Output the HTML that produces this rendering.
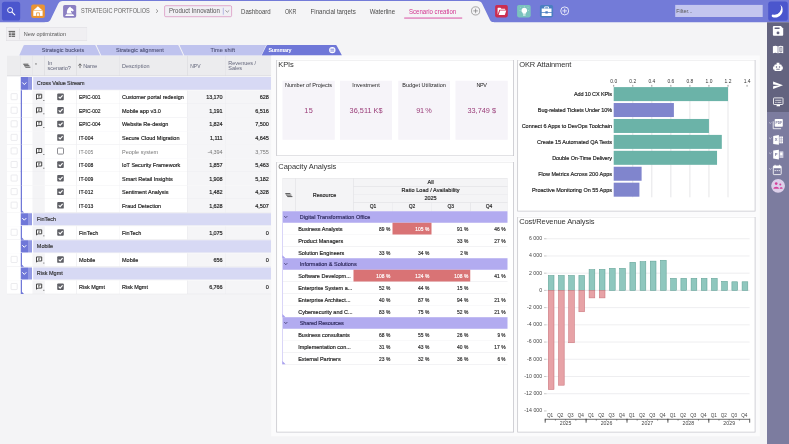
<!DOCTYPE html>
<html lang="en"><head><meta charset="utf-8"><title>Scenario creation</title>
<style>
html,body{margin:0;padding:0;background:#f4f4f6;overflow:hidden;}
body{width:789px;height:444px;position:relative;}
#stage{position:absolute;left:0;top:0;width:3156px;height:1776px;transform:scale(0.25);transform-origin:0 0;font-family:"Liberation Sans",sans-serif;overflow:hidden;}
#stage div,#stage span,#stage svg{position:absolute;}
#stage>div,#stage .t,#stage .t>div{left:0;top:0;width:0;height:0;}
#stage .t{transform:translateZ(0);}
#stage span{white-space:nowrap;}
#stage svg{overflow:visible;}
</style></head><body><div id="stage">
<div id="topbar">
<div style="left:0px;top:0px;width:3156px;height:89.2px;background:#737bd8;"></div>
<svg style="left:0px;top:0px;width:3156px;height:92px;" viewBox="0 0 789 23"><path d="M44.8,22.3 C49.3,22.3 49.8,21.1 51.1,18.6 L58.1,4.1 C59.2,1.9 60.3,1 62.8,1 L477,1 C480,1 481.2,1.8 482.3,4 L489.5,19 C490.6,21.3 491.3,22.3 494,22.3 L494,23 L44.8,23 Z" fill="#f4f4f6"/><rect x="1.9" y="1.8" width="18.3" height="18.8" rx="2.6" fill="#4b56cd"/><circle cx="10.1" cy="10.1" r="2.5" fill="none" stroke="#fff" stroke-width="0.9"/><path d="M12.1,12.2 L14.8,14.8" stroke="#fff" stroke-width="1.1" stroke-linecap="round"/><rect x="31.2" y="4.4" width="13.7" height="13.5" rx="2" fill="#ea9433"/><path d="M37.9,6.2 L42,9.9 L33.8,9.9 Z" fill="#fff"/><path d="M33.3,10.5 H42.6 V15.9 H33.3 Z" fill="#fff"/><path d="M36.6,15.9 V12.8 H39.4 V15.9" fill="none" stroke="#ea9433" stroke-width="0.8"/><rect x="63.1" y="4.9" width="13.1" height="12.8" rx="1.7" fill="#8b7fc2"/><path d="M66.9,13.4 C66.5,10.6 67.6,8.2 70.2,6.5 L70.9,7.7 C72.2,8.1 73.2,9.2 73.8,10.4 L72.9,11.4 L71,10.7 C70.7,11.6 71.6,12.4 72.1,13.4 Z M66.3,14.3 H73.1 L74.3,15.9 H65.1 Z" fill="#fff"/><rect x="164.6" y="5.7" width="67" height="11" rx="1.2" fill="#f1eff4" stroke="#d47bb4" stroke-width="0.6"/><path d="M223.3,7.8 V14.7" stroke="#7b82d4" stroke-width="0.5"/><path d="M225.4,10.4 L227.3,12.2 L229.2,10.4" fill="none" stroke="#555" stroke-width="0.55"/><path d="M156,9.3 L158,11.1 L156,12.9" fill="none" stroke="#666" stroke-width="0.6"/><rect x="404.2" y="17.6" width="58" height="0.9" fill="#d6409c"/><circle cx="475.6" cy="10.9" r="4.1" fill="none" stroke="#666" stroke-width="0.55"/><path d="M473.3,10.9 H477.9 M475.6,8.6 V13.2" stroke="#666" stroke-width="0.6"/><rect x="495.1" y="4.9" width="12.7" height="12.5" rx="1.8" fill="#cb2d4f"/><path d="M497.6,14.7 V8.1 Q497.6,7.7 498,7.7 H500.5 L501.4,8.7 H504.8 Q505.2,8.7 505.2,9.1 V9.7 H499.3 L497.6,14.7 Z M498.6,14.9 L500.1,10.4 H506.3 L504.8,14.9 Z" fill="#fff"/><rect x="517.1" y="4.9" width="13.6" height="12.5" rx="1.8" fill="#7bc2be"/><path d="M524.3,7.7 A2.8,2.8 0 0 1 525.8,12.9 V13.8 H522.8 V12.9 A2.8,2.8 0 0 1 524.3,7.7 Z M523,14.4 H525.6 V15.4 H523 Z" fill="#fff"/><path d="M524.3,5.9 V6.8 M520.4,7.3 L521,7.9 M528.2,7.3 L527.6,7.9 M519.6,10.5 H520.5 M528.1,10.5 H529" stroke="#d9f0ed" stroke-width="0.5"/><rect x="539.9" y="4.9" width="13.2" height="12.5" rx="1.8" fill="#4a7ec1"/><path d="M541.7,8.5 H551.5 V12 H547.8 V11.3 H545.4 V12 H541.7 Z M541.7,12.7 H545.4 V13.5 H547.8 V12.7 H551.5 V16 H541.7 Z" fill="#fff"/><path d="M544.7,8.5 V6.9 H548.5 V8.5" fill="none" stroke="#fff" stroke-width="0.9"/><circle cx="564.7" cy="10.9" r="4" fill="none" stroke="#fff" stroke-width="0.8"/><path d="M562.4,10.9 H567 M564.7,8.6 V13.2" stroke="#e4e5fa" stroke-width="0.95"/><rect x="675.2" y="4.9" width="87.5" height="12.1" fill="#c3c6ef"/><rect x="768.2" y="1.6" width="19.6" height="19.2" rx="2.6" fill="#4b56cd"/><path d="M780.2,4.6 A7.4,7.4 0 0 1 772.3,16.9 A1.3,1.3 0 0 1 772.8,14.5 A6.7,6.7 0 0 0 780.2,4.6 Z" fill="#fff"/></svg>
</div>
<div id="sidebar">
<div style="left:3068px;top:88.8px;width:88px;height:359.2px;background:#63637f;"></div>
<div style="left:3068px;top:448px;width:88px;height:1328px;background:#7c7c9f;"></div>
<svg style="left:3068px;top:88px;width:88px;height:712px;" viewBox="767 22 22 178"><path d="M772.9,27 Q772.9,26.1 773.8,26.1 H780.8 L783.2,28.5 V34.8 Q783.2,35.7 782.3,35.7 H773.8 Q772.9,35.7 772.9,34.8 Z" fill="#fff"/><rect x="774.6" y="27.4" width="5" height="1.7" rx="0.3" fill="#63637f"/><circle cx="778" cy="32.9" r="1.45" fill="#63637f"/><path d="M772.9,46.2 Q775.4,45.2 777.7,46.2 V53.2 Q775.4,52.4 772.9,53.2 Z" fill="#fff"/><path d="M778.3,46.2 Q780.8,45.2 783.2,46.2 V53.2 Q780.8,52.4 778.3,53.2 Z" fill="#fff"/><path d="M779.7,47.3 H782 V51.7 H779.7 Z M780.85,47.3 V51.7" fill="none" stroke="#63637f" stroke-width="0.55"/><path d="M776.6,62.7 H779.4 V64.4 H780.6 Q781.7,64.4 781.7,65.5 V66.5 H782.8 V69.5 H781.7 V70 Q781.7,71.1 780.6,71.1 H775.4 Q774.3,71.1 774.3,70 V69.5 H773.1 V66.5 H774.3 V65.5 Q774.3,64.4 775.4,64.4 H776.6 Z" fill="#fff"/><circle cx="776.5" cy="66.9" r="0.75" fill="#63637f"/><circle cx="779.5" cy="66.9" r="0.75" fill="#63637f"/><rect x="776.3" y="68.8" width="3.4" height="0.8" fill="#63637f"/><path d="M773.1,81.6 L783,85.35 L773.1,89.1 L773.1,86.3 L779.4,85.35 L773.1,84.4 Z" fill="#fff"/><rect x="773.5" y="97.9" width="9.5" height="6.6" rx="0.6" fill="none" stroke="#fff" stroke-width="0.85"/><path d="M776.6,105 H780 V106.3 H776.6 Z" fill="#fff"/><path d="M775.2,100.3 H781.4 M775.2,102.4 H776.6 M777.4,102.4 H781.4" stroke="#fff" stroke-width="0.7"/><rect x="774.7" y="119" width="8.1" height="7.7" rx="0.8" fill="#fff"/><path d="M773.2,121.3 V128.7 H781.1" fill="none" stroke="#fff" stroke-width="0.8"/><path d="M773.2,135.9 L778.9,135.1 V144.7 L773.2,143.9 Z" fill="#fff"/><rect x="779.4" y="136.5" width="3.6" height="6.8" fill="#fff"/><path d="M781.2,136.5 V143.3 M779.4,138.8 H783 M779.4,141 H783" stroke="#7c7c9f" stroke-width="0.45"/><path d="M773.2,150.6 L778.9,149.8 V159.4 L773.2,158.6 Z" fill="#fff"/><rect x="779.4" y="151.3" width="4" height="6.8" rx="0.5" fill="#c9c9dc"/><rect x="780.2" y="152.6" width="2.2" height="2.6" fill="#fff"/><rect x="773.3" y="166.1" width="7.9" height="8.5" rx="0.8" fill="none" stroke="#fff" stroke-width="0.85"/><path d="M773.3,165.8 H781.2 V168.2 H773.3 Z" fill="#fff"/><path d="M775.1,164.8 V166.4 M779.4,164.8 V166.4" stroke="#fff" stroke-width="0.9"/><path d="M774.7,170.6 H775.8 M776.7,170.6 H777.8 M778.7,170.6 H779.8" stroke="#fff" stroke-width="0.9"/><path d="M769,122.3 L770.3,123.5 L771.6,122.3" fill="none" stroke="#e6e6f2" stroke-width="0.55"/><path d="M769,137.6 L770.3,138.8 L771.6,137.6" fill="none" stroke="#e6e6f2" stroke-width="0.55"/><path d="M769,152.6 L770.3,153.8 L771.6,152.6" fill="none" stroke="#e6e6f2" stroke-width="0.55"/><path d="M769,168.3 L770.3,169.5 L771.6,168.3" fill="none" stroke="#e6e6f2" stroke-width="0.55"/><circle cx="778.1" cy="185.8" r="6.9" fill="#ddd0ea"/><circle cx="776.2" cy="183.6" r="1.35" fill="#d6409c"/><path d="M773.4,188.8 C773.4,186.1 779,186.1 779,188.8 Z" fill="#d6409c"/><circle cx="780.3" cy="184.5" r="1" fill="#d6409c"/><path d="M779.6,188.8 C779.4,187.2 782.6,186.5 782.6,188.8 Z" fill="#d6409c"/></svg>
</div>
<div id="toolbar">
<div style="left:24px;top:108px;width:324.8px;height:56px;background:#f0eff2;box-shadow:inset 0 0 0 1.6px #dcdce0;"></div>
<div style="left:77.2px;top:114.4px;width:1.6px;height:43.2px;background:#d2d2d8;"></div>
<svg style="left:28px;top:116px;width:40px;height:40px;" viewBox="7 29 10 10"><path d="M8.6,31.4 H15.1" stroke="#333" stroke-width="0.8"/><path d="M8.9,33.1 H10.9 M11.5,33.1 H15.1" stroke="#444" stroke-width="0.95"/><path d="M8.9,34.7 H10.9 M11.5,34.7 H15.1" stroke="#444" stroke-width="0.95"/><path d="M8.9,36.3 H10.9 M11.5,36.3 H15.1" stroke="#444" stroke-width="0.95"/></svg>
</div>
<div id="tabs">
<svg style="left:60px;top:176px;width:1340px;height:50px;" viewBox="15 44 335 12.5"><path d="M19.2,55.4 L23.6,45.6 Q23.9,45 24.6,45 L94.6,45 Q95.3,45 95.6,45.6 L100.3,55.4 Z" fill="#bfc3ee"/><path d="M101.3,55.4 L96.7,45.6 Q96.5,45 97.3,45 L177.6,45 Q178.3,45 178.6,45.6 L183.3,55.4 Z" fill="#bfc3ee"/><path d="M184.3,55.4 L179.7,45.6 Q179.5,45 180.3,45 L266.2,45 L261.2,55.4 Z" fill="#bfc3ee"/><path d="M261.6,55.4 L266.6,45.6 Q266.9,45 267.6,45 L335.6,45 Q336.3,45 336.6,45.6 L342,55.4 Z" fill="#6f77d8"/><circle cx="332.3" cy="50.1" r="3.2" fill="#fff"/><path d="M330.4,49.2 H334.2 M330.4,51 H334.2" stroke="#6f77d8" stroke-width="0.95"/></svg>
</div>
<div id="grid">
<div style="left:28px;top:223.2px;width:1056.4px;height:80px;background:#ececee;"></div>
<div style="left:79.6px;top:223.2px;width:1.6px;height:80px;background:#d6d6da;"></div>
<div style="left:128.8px;top:223.2px;width:1.6px;height:80px;background:#d6d6da;"></div>
<div style="left:178.4px;top:223.2px;width:1.6px;height:80px;background:#d6d6da;"></div>
<div style="left:305.2px;top:223.2px;width:1.6px;height:80px;background:#d6d6da;"></div>
<div style="left:477.6px;top:223.2px;width:1.6px;height:80px;background:#d6d6da;"></div>
<div style="left:748.4px;top:223.2px;width:1.6px;height:80px;background:#d6d6da;"></div>
<div style="left:901.6px;top:223.2px;width:1.6px;height:80px;background:#d6d6da;"></div>
<div style="left:28px;top:302.4px;width:1056.4px;height:1.8px;background:#d4d4d8;"></div>
<svg style="left:88px;top:240px;width:92px;height:48px;" viewBox="22 60 23 12"><path d="M23.6,64.2 H28.4 M24.6,65.7 H29.4 M25.6,67.2 H30.4" stroke="#444" stroke-width="0.9"/><path d="M23.4,63.8 L25.8,67.6" stroke="#444" stroke-width="0.5"/></svg>
<svg style="left:306px;top:240px;width:30px;height:48px;" viewBox="76.5 60 7.5 12"><path d="M80,68.1 V63.9 M78.4,65.6 L80,63.8 L81.6,65.6" fill="none" stroke="#555" stroke-width="0.8"/></svg>
<div style="left:28px;top:308px;width:104.8px;height:54.24px;background:#fff;"></div>
<div style="left:132.8px;top:308px;width:951.6px;height:50.8px;background:#d7d9f4;"></div>
<div style="left:82.8px;top:308px;width:29.6px;height:50.8px;background:#6f77d8;"></div>
<div style="left:112.4px;top:308px;width:16px;height:50.8px;background:#9399e3;"></div>
<div style="left:28px;top:362.24px;width:1056.4px;height:54.24px;background:#fff;"></div>
<div style="left:129.6px;top:362.24px;width:49.6px;height:54.24px;background:#f4f4f6;"></div>
<div style="left:749.2px;top:362.24px;width:335.2px;height:54.24px;background:#f5f5f7;"></div>
<div style="left:28px;top:415.48px;width:1056.4px;height:1.8px;background:#e6e6ea;"></div>
<div style="left:305.2px;top:362.24px;width:1.6px;height:54.24px;background:#e6e6ea;"></div>
<div style="left:477.6px;top:362.24px;width:1.6px;height:54.24px;background:#e6e6ea;"></div>
<div style="left:748.4px;top:362.24px;width:1.6px;height:54.24px;background:#e6e6ea;"></div>
<div style="left:901.6px;top:362.24px;width:1.6px;height:54.24px;background:#e6e6ea;"></div>
<div style="left:82.8px;top:361.04px;width:5.2px;height:55.44px;background:#7078d8;"></div>
<div style="left:28px;top:416.48px;width:1056.4px;height:54.24px;background:#fff;"></div>
<div style="left:129.6px;top:416.48px;width:49.6px;height:54.24px;background:#f4f4f6;"></div>
<div style="left:749.2px;top:416.48px;width:335.2px;height:54.24px;background:#f5f5f7;"></div>
<div style="left:28px;top:469.72px;width:1056.4px;height:1.8px;background:#e6e6ea;"></div>
<div style="left:305.2px;top:416.48px;width:1.6px;height:54.24px;background:#e6e6ea;"></div>
<div style="left:477.6px;top:416.48px;width:1.6px;height:54.24px;background:#e6e6ea;"></div>
<div style="left:748.4px;top:416.48px;width:1.6px;height:54.24px;background:#e6e6ea;"></div>
<div style="left:901.6px;top:416.48px;width:1.6px;height:54.24px;background:#e6e6ea;"></div>
<div style="left:82.8px;top:415.28px;width:5.2px;height:55.44px;background:#7078d8;"></div>
<div style="left:28px;top:470.72px;width:1056.4px;height:54.24px;background:#fff;"></div>
<div style="left:129.6px;top:470.72px;width:49.6px;height:54.24px;background:#f4f4f6;"></div>
<div style="left:749.2px;top:470.72px;width:335.2px;height:54.24px;background:#f5f5f7;"></div>
<div style="left:28px;top:523.96px;width:1056.4px;height:1.8px;background:#e6e6ea;"></div>
<div style="left:305.2px;top:470.72px;width:1.6px;height:54.24px;background:#e6e6ea;"></div>
<div style="left:477.6px;top:470.72px;width:1.6px;height:54.24px;background:#e6e6ea;"></div>
<div style="left:748.4px;top:470.72px;width:1.6px;height:54.24px;background:#e6e6ea;"></div>
<div style="left:901.6px;top:470.72px;width:1.6px;height:54.24px;background:#e6e6ea;"></div>
<div style="left:82.8px;top:469.52px;width:5.2px;height:55.44px;background:#7078d8;"></div>
<div style="left:28px;top:524.96px;width:1056.4px;height:54.24px;background:#fff;"></div>
<div style="left:129.6px;top:524.96px;width:49.6px;height:54.24px;background:#f4f4f6;"></div>
<div style="left:749.2px;top:524.96px;width:335.2px;height:54.24px;background:#f5f5f7;"></div>
<div style="left:28px;top:578.2px;width:1056.4px;height:1.8px;background:#e6e6ea;"></div>
<div style="left:305.2px;top:524.96px;width:1.6px;height:54.24px;background:#e6e6ea;"></div>
<div style="left:477.6px;top:524.96px;width:1.6px;height:54.24px;background:#e6e6ea;"></div>
<div style="left:748.4px;top:524.96px;width:1.6px;height:54.24px;background:#e6e6ea;"></div>
<div style="left:901.6px;top:524.96px;width:1.6px;height:54.24px;background:#e6e6ea;"></div>
<div style="left:82.8px;top:523.76px;width:5.2px;height:55.44px;background:#7078d8;"></div>
<div style="left:28px;top:579.2px;width:1056.4px;height:54.24px;background:#fff;"></div>
<div style="left:129.6px;top:579.2px;width:49.6px;height:54.24px;background:#f4f4f6;"></div>
<div style="left:749.2px;top:579.2px;width:335.2px;height:54.24px;background:#f5f5f7;"></div>
<div style="left:28px;top:632.44px;width:1056.4px;height:1.8px;background:#e6e6ea;"></div>
<div style="left:305.2px;top:579.2px;width:1.6px;height:54.24px;background:#e6e6ea;"></div>
<div style="left:477.6px;top:579.2px;width:1.6px;height:54.24px;background:#e6e6ea;"></div>
<div style="left:748.4px;top:579.2px;width:1.6px;height:54.24px;background:#e6e6ea;"></div>
<div style="left:901.6px;top:579.2px;width:1.6px;height:54.24px;background:#e6e6ea;"></div>
<div style="left:82.8px;top:578px;width:5.2px;height:55.44px;background:#7078d8;"></div>
<div style="left:28px;top:633.44px;width:1056.4px;height:54.24px;background:#fff;"></div>
<div style="left:129.6px;top:633.44px;width:49.6px;height:54.24px;background:#f4f4f6;"></div>
<div style="left:749.2px;top:633.44px;width:335.2px;height:54.24px;background:#f5f5f7;"></div>
<div style="left:28px;top:686.68px;width:1056.4px;height:1.8px;background:#e6e6ea;"></div>
<div style="left:305.2px;top:633.44px;width:1.6px;height:54.24px;background:#e6e6ea;"></div>
<div style="left:477.6px;top:633.44px;width:1.6px;height:54.24px;background:#e6e6ea;"></div>
<div style="left:748.4px;top:633.44px;width:1.6px;height:54.24px;background:#e6e6ea;"></div>
<div style="left:901.6px;top:633.44px;width:1.6px;height:54.24px;background:#e6e6ea;"></div>
<div style="left:82.8px;top:632.24px;width:5.2px;height:55.44px;background:#7078d8;"></div>
<div style="left:28px;top:687.68px;width:1056.4px;height:54.24px;background:#fff;"></div>
<div style="left:129.6px;top:687.68px;width:49.6px;height:54.24px;background:#f4f4f6;"></div>
<div style="left:749.2px;top:687.68px;width:335.2px;height:54.24px;background:#f5f5f7;"></div>
<div style="left:28px;top:740.92px;width:1056.4px;height:1.8px;background:#e6e6ea;"></div>
<div style="left:305.2px;top:687.68px;width:1.6px;height:54.24px;background:#e6e6ea;"></div>
<div style="left:477.6px;top:687.68px;width:1.6px;height:54.24px;background:#e6e6ea;"></div>
<div style="left:748.4px;top:687.68px;width:1.6px;height:54.24px;background:#e6e6ea;"></div>
<div style="left:901.6px;top:687.68px;width:1.6px;height:54.24px;background:#e6e6ea;"></div>
<div style="left:82.8px;top:686.48px;width:5.2px;height:55.44px;background:#7078d8;"></div>
<div style="left:28px;top:741.92px;width:1056.4px;height:54.24px;background:#fff;"></div>
<div style="left:129.6px;top:741.92px;width:49.6px;height:54.24px;background:#f4f4f6;"></div>
<div style="left:749.2px;top:741.92px;width:335.2px;height:54.24px;background:#f5f5f7;"></div>
<div style="left:28px;top:795.16px;width:1056.4px;height:1.8px;background:#e6e6ea;"></div>
<div style="left:305.2px;top:741.92px;width:1.6px;height:54.24px;background:#e6e6ea;"></div>
<div style="left:477.6px;top:741.92px;width:1.6px;height:54.24px;background:#e6e6ea;"></div>
<div style="left:748.4px;top:741.92px;width:1.6px;height:54.24px;background:#e6e6ea;"></div>
<div style="left:901.6px;top:741.92px;width:1.6px;height:54.24px;background:#e6e6ea;"></div>
<div style="left:82.8px;top:740.72px;width:5.2px;height:55.44px;background:#7078d8;"></div>
<div style="left:28px;top:796.16px;width:1056.4px;height:54.24px;background:#fff;"></div>
<div style="left:129.6px;top:796.16px;width:49.6px;height:54.24px;background:#f4f4f6;"></div>
<div style="left:749.2px;top:796.16px;width:335.2px;height:54.24px;background:#f5f5f7;"></div>
<div style="left:28px;top:849.4px;width:1056.4px;height:1.8px;background:#e6e6ea;"></div>
<div style="left:305.2px;top:796.16px;width:1.6px;height:54.24px;background:#e6e6ea;"></div>
<div style="left:477.6px;top:796.16px;width:1.6px;height:54.24px;background:#e6e6ea;"></div>
<div style="left:748.4px;top:796.16px;width:1.6px;height:54.24px;background:#e6e6ea;"></div>
<div style="left:901.6px;top:796.16px;width:1.6px;height:54.24px;background:#e6e6ea;"></div>
<div style="left:82.8px;top:794.96px;width:5.2px;height:55.44px;background:#7078d8;"></div>
<div style="left:28px;top:850.4px;width:104.8px;height:54.24px;background:#fff;"></div>
<div style="left:132.8px;top:852.8px;width:951.6px;height:48.4px;background:#d7d9f4;"></div>
<div style="left:82.8px;top:852.8px;width:29.6px;height:48.4px;background:#6f77d8;"></div>
<div style="left:112.4px;top:852.8px;width:16px;height:48.4px;background:#9399e3;"></div>
<div style="left:28px;top:904.64px;width:1056.4px;height:54.24px;background:#fff;"></div>
<div style="left:129.6px;top:904.64px;width:49.6px;height:54.24px;background:#f4f4f6;"></div>
<div style="left:749.2px;top:904.64px;width:335.2px;height:54.24px;background:#f5f5f7;"></div>
<div style="left:28px;top:957.88px;width:1056.4px;height:1.8px;background:#e6e6ea;"></div>
<div style="left:305.2px;top:904.64px;width:1.6px;height:54.24px;background:#e6e6ea;"></div>
<div style="left:477.6px;top:904.64px;width:1.6px;height:54.24px;background:#e6e6ea;"></div>
<div style="left:748.4px;top:904.64px;width:1.6px;height:54.24px;background:#e6e6ea;"></div>
<div style="left:901.6px;top:904.64px;width:1.6px;height:54.24px;background:#e6e6ea;"></div>
<div style="left:82.8px;top:903.44px;width:5.2px;height:55.44px;background:#7078d8;"></div>
<div style="left:28px;top:958.88px;width:104.8px;height:54.24px;background:#fff;"></div>
<div style="left:132.8px;top:961.28px;width:951.6px;height:48.4px;background:#d7d9f4;"></div>
<div style="left:82.8px;top:961.28px;width:29.6px;height:48.4px;background:#6f77d8;"></div>
<div style="left:112.4px;top:961.28px;width:16px;height:48.4px;background:#9399e3;"></div>
<div style="left:28px;top:1013.12px;width:1056.4px;height:54.24px;background:#fff;"></div>
<div style="left:129.6px;top:1013.12px;width:49.6px;height:54.24px;background:#f4f4f6;"></div>
<div style="left:749.2px;top:1013.12px;width:335.2px;height:54.24px;background:#f5f5f7;"></div>
<div style="left:28px;top:1066.36px;width:1056.4px;height:1.8px;background:#e6e6ea;"></div>
<div style="left:305.2px;top:1013.12px;width:1.6px;height:54.24px;background:#e6e6ea;"></div>
<div style="left:477.6px;top:1013.12px;width:1.6px;height:54.24px;background:#e6e6ea;"></div>
<div style="left:748.4px;top:1013.12px;width:1.6px;height:54.24px;background:#e6e6ea;"></div>
<div style="left:901.6px;top:1013.12px;width:1.6px;height:54.24px;background:#e6e6ea;"></div>
<div style="left:82.8px;top:1011.92px;width:5.2px;height:55.44px;background:#7078d8;"></div>
<div style="left:28px;top:1067.36px;width:104.8px;height:54.24px;background:#fff;"></div>
<div style="left:132.8px;top:1069.76px;width:951.6px;height:48.4px;background:#d7d9f4;"></div>
<div style="left:82.8px;top:1069.76px;width:29.6px;height:48.4px;background:#6f77d8;"></div>
<div style="left:112.4px;top:1069.76px;width:16px;height:48.4px;background:#9399e3;"></div>
<div style="left:28px;top:1121.6px;width:1056.4px;height:54.24px;background:#fff;"></div>
<div style="left:129.6px;top:1121.6px;width:49.6px;height:54.24px;background:#f4f4f6;"></div>
<div style="left:749.2px;top:1121.6px;width:335.2px;height:54.24px;background:#f5f5f7;"></div>
<div style="left:28px;top:1174.84px;width:1056.4px;height:1.8px;background:#e6e6ea;"></div>
<div style="left:305.2px;top:1121.6px;width:1.6px;height:54.24px;background:#e6e6ea;"></div>
<div style="left:477.6px;top:1121.6px;width:1.6px;height:54.24px;background:#e6e6ea;"></div>
<div style="left:748.4px;top:1121.6px;width:1.6px;height:54.24px;background:#e6e6ea;"></div>
<div style="left:901.6px;top:1121.6px;width:1.6px;height:54.24px;background:#e6e6ea;"></div>
<div style="left:82.8px;top:1120.4px;width:5.2px;height:55.44px;background:#7078d8;"></div>
<svg style="left:0px;top:280px;width:1100px;height:920px;" viewBox="0 70 275 230"><path d="M22.3,82.48 L24.3,84.58 L26.3,82.48" fill="none" stroke="#fff" stroke-width="1.0"/><rect x="11.1" y="93.64" width="6.1" height="6.1" rx="0.6" fill="#fff" stroke="#d6d6dc" stroke-width="0.5"/><path d="M36.5,94.24 H41.7 V98.24 H37.9 L36.5,99.34 Z" fill="#fff" stroke="#444" stroke-width="1.0" stroke-linejoin="round"/><path d="M38,95.54 H40.3 M38,96.84 H39.6" stroke="#444" stroke-width="0.7"/><rect x="43" y="100.04" width="1.5" height="0.55" fill="#444"/><rect x="57.2" y="93.54" width="6.6" height="6.6" rx="0.9" fill="#5e5f65"/><path d="M58.7,96.84 L60.1,98.24 L62.6,95.44" fill="none" stroke="#fff" stroke-width="1.15"/><rect x="11.1" y="107.2" width="6.1" height="6.1" rx="0.6" fill="#fff" stroke="#d6d6dc" stroke-width="0.5"/><path d="M36.5,107.8 H41.7 V111.8 H37.9 L36.5,112.9 Z" fill="#fff" stroke="#444" stroke-width="1.0" stroke-linejoin="round"/><path d="M38,109.1 H40.3 M38,110.4 H39.6" stroke="#444" stroke-width="0.7"/><rect x="43" y="113.6" width="1.5" height="0.55" fill="#444"/><rect x="57.2" y="107.1" width="6.6" height="6.6" rx="0.9" fill="#5e5f65"/><path d="M58.7,110.4 L60.1,111.8 L62.6,109" fill="none" stroke="#fff" stroke-width="1.15"/><rect x="11.1" y="120.76" width="6.1" height="6.1" rx="0.6" fill="#fff" stroke="#d6d6dc" stroke-width="0.5"/><path d="M36.5,121.36 H41.7 V125.36 H37.9 L36.5,126.46 Z" fill="#fff" stroke="#444" stroke-width="1.0" stroke-linejoin="round"/><path d="M38,122.66 H40.3 M38,123.96 H39.6" stroke="#444" stroke-width="0.7"/><rect x="43" y="127.16" width="1.5" height="0.55" fill="#444"/><rect x="57.2" y="120.66" width="6.6" height="6.6" rx="0.9" fill="#5e5f65"/><path d="M58.7,123.96 L60.1,125.36 L62.6,122.56" fill="none" stroke="#fff" stroke-width="1.15"/><rect x="11.1" y="134.32" width="6.1" height="6.1" rx="0.6" fill="#fff" stroke="#d6d6dc" stroke-width="0.5"/><rect x="57.2" y="134.22" width="6.6" height="6.6" rx="0.9" fill="#5e5f65"/><path d="M58.7,137.52 L60.1,138.92 L62.6,136.12" fill="none" stroke="#fff" stroke-width="1.15"/><rect x="11.1" y="147.88" width="6.1" height="6.1" rx="0.6" fill="#fff" stroke="#d6d6dc" stroke-width="0.5"/><path d="M36.5,148.48 H41.7 V152.48 H37.9 L36.5,153.58 Z" fill="#fff" stroke="#444" stroke-width="1.0" stroke-linejoin="round"/><path d="M38,149.78 H40.3 M38,151.08 H39.6" stroke="#444" stroke-width="0.7"/><rect x="43" y="154.28" width="1.5" height="0.55" fill="#444"/><rect x="57.5" y="148.08" width="6" height="6" rx="0.8" fill="#fff" stroke="#5e5f65" stroke-width="0.7"/><rect x="11.1" y="161.44" width="6.1" height="6.1" rx="0.6" fill="#fff" stroke="#d6d6dc" stroke-width="0.5"/><path d="M36.5,162.04 H41.7 V166.04 H37.9 L36.5,167.14 Z" fill="#fff" stroke="#444" stroke-width="1.0" stroke-linejoin="round"/><path d="M38,163.34 H40.3 M38,164.64 H39.6" stroke="#444" stroke-width="0.7"/><rect x="43" y="167.84" width="1.5" height="0.55" fill="#444"/><rect x="57.2" y="161.34" width="6.6" height="6.6" rx="0.9" fill="#5e5f65"/><path d="M58.7,164.64 L60.1,166.04 L62.6,163.24" fill="none" stroke="#fff" stroke-width="1.15"/><rect x="11.1" y="175" width="6.1" height="6.1" rx="0.6" fill="#fff" stroke="#d6d6dc" stroke-width="0.5"/><rect x="57.2" y="174.9" width="6.6" height="6.6" rx="0.9" fill="#5e5f65"/><path d="M58.7,178.2 L60.1,179.6 L62.6,176.8" fill="none" stroke="#fff" stroke-width="1.15"/><rect x="11.1" y="188.56" width="6.1" height="6.1" rx="0.6" fill="#fff" stroke="#d6d6dc" stroke-width="0.5"/><rect x="57.2" y="188.46" width="6.6" height="6.6" rx="0.9" fill="#5e5f65"/><path d="M58.7,191.76 L60.1,193.16 L62.6,190.36" fill="none" stroke="#fff" stroke-width="1.15"/><path d="M21,209.4 L24,212.6 L21,212.6 Z" fill="#7078d8"/><rect x="11.1" y="202.12" width="6.1" height="6.1" rx="0.6" fill="#fff" stroke="#d6d6dc" stroke-width="0.5"/><rect x="57.2" y="202.02" width="6.6" height="6.6" rx="0.9" fill="#5e5f65"/><path d="M58.7,205.32 L60.1,206.72 L62.6,203.92" fill="none" stroke="#fff" stroke-width="1.15"/><path d="M22.3,218.08 L24.3,220.18 L26.3,218.08" fill="none" stroke="#fff" stroke-width="1.0"/><path d="M21,236.52 L24,239.72 L21,239.72 Z" fill="#7078d8"/><rect x="11.1" y="229.24" width="6.1" height="6.1" rx="0.6" fill="#fff" stroke="#d6d6dc" stroke-width="0.5"/><path d="M36.5,229.84 H41.7 V233.84 H37.9 L36.5,234.94 Z" fill="#fff" stroke="#444" stroke-width="1.0" stroke-linejoin="round"/><path d="M38,231.14 H40.3 M38,232.44 H39.6" stroke="#444" stroke-width="0.7"/><rect x="43" y="235.64" width="1.5" height="0.55" fill="#444"/><rect x="57.2" y="229.14" width="6.6" height="6.6" rx="0.9" fill="#5e5f65"/><path d="M58.7,232.44 L60.1,233.84 L62.6,231.04" fill="none" stroke="#fff" stroke-width="1.15"/><path d="M22.3,245.2 L24.3,247.3 L26.3,245.2" fill="none" stroke="#fff" stroke-width="1.0"/><path d="M21,263.64 L24,266.84 L21,266.84 Z" fill="#7078d8"/><rect x="11.1" y="256.36" width="6.1" height="6.1" rx="0.6" fill="#fff" stroke="#d6d6dc" stroke-width="0.5"/><path d="M36.5,256.96 H41.7 V260.96 H37.9 L36.5,262.06 Z" fill="#fff" stroke="#444" stroke-width="1.0" stroke-linejoin="round"/><path d="M38,258.26 H40.3 M38,259.56 H39.6" stroke="#444" stroke-width="0.7"/><rect x="43" y="262.76" width="1.5" height="0.55" fill="#444"/><rect x="57.2" y="256.26" width="6.6" height="6.6" rx="0.9" fill="#5e5f65"/><path d="M58.7,259.56 L60.1,260.96 L62.6,258.16" fill="none" stroke="#fff" stroke-width="1.15"/><path d="M22.3,272.32 L24.3,274.42 L26.3,272.32" fill="none" stroke="#fff" stroke-width="1.0"/><path d="M21,290.76 L24,293.96 L21,293.96 Z" fill="#7078d8"/><rect x="11.1" y="283.48" width="6.1" height="6.1" rx="0.6" fill="#fff" stroke="#d6d6dc" stroke-width="0.5"/><path d="M36.5,284.08 H41.7 V288.08 H37.9 L36.5,289.18 Z" fill="#fff" stroke="#444" stroke-width="1.0" stroke-linejoin="round"/><path d="M38,285.38 H40.3 M38,286.68 H39.6" stroke="#444" stroke-width="0.7"/><rect x="43" y="289.88" width="1.5" height="0.55" fill="#444"/><rect x="57.2" y="283.38" width="6.6" height="6.6" rx="0.9" fill="#5e5f65"/><path d="M58.7,286.68 L60.1,288.08 L62.6,285.28" fill="none" stroke="#fff" stroke-width="1.15"/></svg>
</div>
<div id="rightpane">
<div style="left:1084.8px;top:222px;width:1954.4px;height:1523.2px;background:#fbfbfc;"></div>
</div>
<div id="kpi">
<div style="left:1105.2px;top:237.6px;width:950.8px;height:387.6px;background:#fff;box-shadow:inset 0 0 0 3.2px #c6c6cc;"></div>
<div style="left:1129.6px;top:323.2px;width:209.2px;height:236px;background:#f6f4f9;"></div>
<div style="left:1360px;top:323.2px;width:208.4px;height:236px;background:#f6f4f9;"></div>
<div style="left:1592.8px;top:323.2px;width:206.8px;height:236px;background:#f6f4f9;"></div>
<div style="left:1822.4px;top:323.2px;width:208.8px;height:236px;background:#f6f4f9;"></div>
</div>
<div id="capacity">
<div style="left:1105.2px;top:646px;width:950.8px;height:1084px;background:#fff;box-shadow:inset 0 0 0 3.2px #c6c6cc;"></div>
<div style="left:1129.6px;top:714px;width:900.8px;height:131.2px;background:#f4f4f6;"></div>
<div style="left:1129.6px;top:713.2px;width:900.8px;height:1.6px;background:#dcdce0;"></div>
<div style="left:1414px;top:745.2px;width:616.4px;height:1.6px;background:#dcdce0;"></div>
<div style="left:1414px;top:777.6px;width:616.4px;height:1.6px;background:#dcdce0;"></div>
<div style="left:1414px;top:810px;width:616.4px;height:1.6px;background:#dcdce0;"></div>
<div style="left:1128.8px;top:714px;width:1.6px;height:131.2px;background:#dcdce0;"></div>
<div style="left:1181.2px;top:714px;width:1.6px;height:131.2px;background:#dcdce0;"></div>
<div style="left:1413.2px;top:714px;width:1.6px;height:131.2px;background:#dcdce0;"></div>
<div style="left:2029.6px;top:714px;width:1.6px;height:131.2px;background:#dcdce0;"></div>
<div style="left:1568.8px;top:810.8px;width:1.6px;height:34.4px;background:#dcdce0;"></div>
<div style="left:1724.8px;top:810.8px;width:1.6px;height:34.4px;background:#dcdce0;"></div>
<div style="left:1880.4px;top:810.8px;width:1.6px;height:34.4px;background:#dcdce0;"></div>
<svg style="left:1132px;top:752px;width:48px;height:48px;" viewBox="283 188 12 12"><path d="M285.6,193.6 H290.4 M286.6,195.1 H291.4 M287.6,196.6 H292.4" stroke="#444" stroke-width="0.9"/><path d="M285.4,193.2 L287.8,197" stroke="#444" stroke-width="0.5"/></svg>
<div style="left:1129.6px;top:845.2px;width:900.8px;height:46px;background:#b2abf0;"></div>
<div style="left:1129.6px;top:937.8px;width:900.8px;height:1.6px;background:#e6e6ea;"></div>
<div style="left:1129.6px;top:891.2px;width:2.8px;height:47.4px;background:#b2abf0;"></div>
<div style="left:1569.6px;top:891.2px;width:156px;height:47px;background:#d97375;"></div>
<div style="left:1129.6px;top:985.2px;width:900.8px;height:1.6px;background:#e6e6ea;"></div>
<div style="left:1129.6px;top:938.6px;width:2.8px;height:47.4px;background:#b2abf0;"></div>
<div style="left:1129.6px;top:1032.6px;width:900.8px;height:1.6px;background:#e6e6ea;"></div>
<div style="left:1129.6px;top:986px;width:2.8px;height:47.4px;background:#b2abf0;"></div>
<div style="left:1129.6px;top:1033.4px;width:900.8px;height:46px;background:#b2abf0;"></div>
<div style="left:1129.6px;top:1126px;width:900.8px;height:1.6px;background:#e6e6ea;"></div>
<div style="left:1129.6px;top:1079.4px;width:2.8px;height:47.4px;background:#b2abf0;"></div>
<div style="left:1414px;top:1079.4px;width:467.2px;height:47px;background:#d97375;"></div>
<div style="left:1129.6px;top:1173.4px;width:900.8px;height:1.6px;background:#e6e6ea;"></div>
<div style="left:1129.6px;top:1126.8px;width:2.8px;height:47.4px;background:#b2abf0;"></div>
<div style="left:1129.6px;top:1220.8px;width:900.8px;height:1.6px;background:#e6e6ea;"></div>
<div style="left:1129.6px;top:1174.2px;width:2.8px;height:47.4px;background:#b2abf0;"></div>
<div style="left:1129.6px;top:1268.2px;width:900.8px;height:1.6px;background:#e6e6ea;"></div>
<div style="left:1129.6px;top:1221.6px;width:2.8px;height:47.4px;background:#b2abf0;"></div>
<div style="left:1129.6px;top:1269px;width:900.8px;height:46px;background:#b2abf0;"></div>
<div style="left:1129.6px;top:1361.6px;width:900.8px;height:1.6px;background:#e6e6ea;"></div>
<div style="left:1129.6px;top:1315px;width:2.8px;height:47.4px;background:#b2abf0;"></div>
<div style="left:1129.6px;top:1409px;width:900.8px;height:1.6px;background:#e6e6ea;"></div>
<div style="left:1129.6px;top:1362.4px;width:2.8px;height:47.4px;background:#b2abf0;"></div>
<div style="left:1129.6px;top:1456.4px;width:900.8px;height:1.6px;background:#e6e6ea;"></div>
<div style="left:1129.6px;top:1409.8px;width:2.8px;height:47.4px;background:#b2abf0;"></div>
<svg style="left:1128px;top:820px;width:56px;height:660px;" viewBox="282 205 14 165"><path d="M284.3,216.15 L285.8,217.65 L287.3,216.15" fill="none" stroke="#2e2a5c" stroke-width="0.75"/><path d="M282.4,255.15 L285.6,258.35 L282.4,258.35 Z" fill="#a9a1ee"/><path d="M284.3,263.2 L285.8,264.7 L287.3,263.2" fill="none" stroke="#2e2a5c" stroke-width="0.75"/><path d="M282.4,314.05 L285.6,317.25 L282.4,317.25 Z" fill="#a9a1ee"/><path d="M284.3,322.1 L285.8,323.6 L287.3,322.1" fill="none" stroke="#2e2a5c" stroke-width="0.75"/><path d="M282.4,361.1 L285.6,364.3 L282.4,364.3 Z" fill="#a9a1ee"/></svg>
</div>
<div id="okr">
<div style="left:2068.8px;top:237.6px;width:953.6px;height:608.8px;background:#fff;box-shadow:inset 0 0 0 3.2px #c6c6cc;"></div>
<svg style="left:2400px;top:320px;width:620px;height:480px;" viewBox="600 80 155 120"><path d="M613.7,84.9 V86.7" stroke="#333" stroke-width="0.5"/><path d="M632.75,84.9 V86.7" stroke="#333" stroke-width="0.5"/><path d="M632.75,86.6 V197.3" stroke="#cdcdd1" stroke-width="0.5"/><path d="M651.8,84.9 V86.7" stroke="#333" stroke-width="0.5"/><path d="M651.8,86.6 V197.3" stroke="#cdcdd1" stroke-width="0.5"/><path d="M670.85,84.9 V86.7" stroke="#333" stroke-width="0.5"/><path d="M670.85,86.6 V197.3" stroke="#cdcdd1" stroke-width="0.5"/><path d="M689.9,84.9 V86.7" stroke="#333" stroke-width="0.5"/><path d="M689.9,86.6 V197.3" stroke="#cdcdd1" stroke-width="0.5"/><path d="M708.95,84.9 V86.7" stroke="#333" stroke-width="0.5"/><path d="M708.95,86.6 V197.3" stroke="#cdcdd1" stroke-width="0.5"/><path d="M728,84.9 V86.7" stroke="#333" stroke-width="0.5"/><path d="M728,86.6 V197.3" stroke="#cdcdd1" stroke-width="0.5"/><path d="M747.05,84.9 V86.7" stroke="#333" stroke-width="0.5"/><rect x="613.7" y="87.1" width="114.3" height="14" fill="#6bb3a8"/><rect x="613.7" y="103.03" width="60.198" height="14" fill="#8085cd"/><rect x="613.7" y="118.96" width="95.25" height="14" fill="#6bb3a8"/><rect x="613.7" y="134.89" width="108.109" height="14" fill="#6bb3a8"/><rect x="613.7" y="150.82" width="103.346" height="14" fill="#6bb3a8"/><rect x="613.7" y="166.75" width="27.9082" height="14" fill="#8085cd"/><rect x="613.7" y="182.68" width="25.7175" height="14" fill="#8085cd"/></svg>
</div>
<div id="cost">
<div style="left:2068.8px;top:866.4px;width:953.6px;height:863.2px;background:#fff;box-shadow:inset 0 0 0 3.2px #c6c6cc;"></div>
<svg style="left:2080px;top:920px;width:940px;height:800px;" viewBox="520 230 235 200"><path d="M544,238.74 H546.6" stroke="#777" stroke-width="0.4"/><path d="M546.6,238.74 H749.6" stroke="#d9d9dd" stroke-width="0.45"/><path d="M544,255.96 H546.6" stroke="#777" stroke-width="0.4"/><path d="M546.6,255.96 H749.6" stroke="#d9d9dd" stroke-width="0.45"/><path d="M544,273.18 H546.6" stroke="#777" stroke-width="0.4"/><path d="M546.6,273.18 H749.6" stroke="#d9d9dd" stroke-width="0.45"/><path d="M544,290.4 H546.6" stroke="#777" stroke-width="0.4"/><path d="M546.6,290.4 H749.6" stroke="#c2c2c6" stroke-width="0.45"/><path d="M544,307.62 H546.6" stroke="#777" stroke-width="0.4"/><path d="M546.6,307.62 H749.6" stroke="#d9d9dd" stroke-width="0.45"/><path d="M544,324.84 H546.6" stroke="#777" stroke-width="0.4"/><path d="M546.6,324.84 H749.6" stroke="#d9d9dd" stroke-width="0.45"/><path d="M544,342.06 H546.6" stroke="#777" stroke-width="0.4"/><path d="M546.6,342.06 H749.6" stroke="#d9d9dd" stroke-width="0.45"/><path d="M544,359.28 H546.6" stroke="#777" stroke-width="0.4"/><path d="M546.6,359.28 H749.6" stroke="#d9d9dd" stroke-width="0.45"/><path d="M544,376.5 H546.6" stroke="#777" stroke-width="0.4"/><path d="M546.6,376.5 H749.6" stroke="#d9d9dd" stroke-width="0.45"/><path d="M544,393.72 H546.6" stroke="#777" stroke-width="0.4"/><path d="M546.6,393.72 H749.6" stroke="#d9d9dd" stroke-width="0.45"/><path d="M544,410.94 H546.6" stroke="#777" stroke-width="0.4"/><rect x="548.3" y="275.505" width="5.7" height="14.8953" fill="#8fc7be" stroke="#5fa194" stroke-width="0.55"/><rect x="548.3" y="290.4" width="5.7" height="99.1011" fill="#e7a2a6" stroke="#c9737a" stroke-width="0.55"/><rect x="558.5" y="275.505" width="5.7" height="14.8953" fill="#8fc7be" stroke="#5fa194" stroke-width="0.55"/><rect x="558.5" y="290.4" width="5.7" height="94.7961" fill="#e7a2a6" stroke="#c9737a" stroke-width="0.55"/><rect x="568.7" y="275.505" width="5.7" height="14.8953" fill="#8fc7be" stroke="#5fa194" stroke-width="0.55"/><rect x="568.7" y="290.4" width="5.7" height="52.3488" fill="#e7a2a6" stroke="#c9737a" stroke-width="0.55"/><rect x="578.9" y="275.505" width="5.7" height="14.8953" fill="#8fc7be" stroke="#5fa194" stroke-width="0.55"/><rect x="578.9" y="290.4" width="5.7" height="21.3528" fill="#e7a2a6" stroke="#c9737a" stroke-width="0.55"/><rect x="589.1" y="269.65" width="5.7" height="20.7501" fill="#8fc7be" stroke="#5fa194" stroke-width="0.55"/><rect x="589.1" y="290.4" width="5.7" height="7.4907" fill="#e7a2a6" stroke="#c9737a" stroke-width="0.55"/><rect x="599.3" y="269.392" width="5.7" height="21.0084" fill="#8fc7be" stroke="#5fa194" stroke-width="0.55"/><rect x="599.3" y="290.4" width="5.7" height="7.4907" fill="#e7a2a6" stroke="#c9737a" stroke-width="0.55"/><rect x="609.5" y="268.358" width="5.7" height="22.0416" fill="#8fc7be" stroke="#5fa194" stroke-width="0.55"/><rect x="619.7" y="268.358" width="5.7" height="22.0416" fill="#8fc7be" stroke="#5fa194" stroke-width="0.55"/><rect x="629.9" y="262.331" width="5.7" height="28.0686" fill="#8fc7be" stroke="#5fa194" stroke-width="0.55"/><rect x="640.1" y="261.643" width="5.7" height="28.7574" fill="#8fc7be" stroke="#5fa194" stroke-width="0.55"/><rect x="650.3" y="261.126" width="5.7" height="29.274" fill="#8fc7be" stroke="#5fa194" stroke-width="0.55"/><rect x="660.5" y="260.265" width="5.7" height="30.135" fill="#8fc7be" stroke="#5fa194" stroke-width="0.55"/><rect x="670.7" y="278.346" width="5.7" height="12.054" fill="#8fc7be" stroke="#5fa194" stroke-width="0.55"/><rect x="680.9" y="278.346" width="5.7" height="12.054" fill="#8fc7be" stroke="#5fa194" stroke-width="0.55"/><rect x="691.1" y="278.346" width="5.7" height="12.054" fill="#8fc7be" stroke="#5fa194" stroke-width="0.55"/><rect x="701.3" y="278.346" width="5.7" height="12.054" fill="#8fc7be" stroke="#5fa194" stroke-width="0.55"/><rect x="711.5" y="278.346" width="5.7" height="12.054" fill="#8fc7be" stroke="#5fa194" stroke-width="0.55"/><rect x="721.7" y="281.359" width="5.7" height="9.0405" fill="#8fc7be" stroke="#5fa194" stroke-width="0.55"/><rect x="731.9" y="281.79" width="5.7" height="8.61" fill="#8fc7be" stroke="#5fa194" stroke-width="0.55"/><rect x="742.1" y="281.79" width="5.7" height="8.61" fill="#8fc7be" stroke="#5fa194" stroke-width="0.55"/><path d="M545.2,419.3 H749.6" stroke="#333" stroke-width="0.7"/><path d="M545.2,418.7 V422.7" stroke="#333" stroke-width="0.8"/><path d="M586.1,418.7 V422.7" stroke="#333" stroke-width="0.8"/><path d="M627,418.7 V422.7" stroke="#333" stroke-width="0.8"/><path d="M667.9,418.7 V422.7" stroke="#333" stroke-width="0.8"/><path d="M708.8,418.7 V422.7" stroke="#333" stroke-width="0.8"/><path d="M749.7,418.7 V422.7" stroke="#333" stroke-width="0.8"/><path d="M545.2,419.3 V420.6" stroke="#333" stroke-width="0.55"/><path d="M555.42,419.3 V420.6" stroke="#333" stroke-width="0.55"/><path d="M565.64,419.3 V420.6" stroke="#333" stroke-width="0.55"/><path d="M575.86,419.3 V420.6" stroke="#333" stroke-width="0.55"/><path d="M586.08,419.3 V420.6" stroke="#333" stroke-width="0.55"/><path d="M596.3,419.3 V420.6" stroke="#333" stroke-width="0.55"/><path d="M606.52,419.3 V420.6" stroke="#333" stroke-width="0.55"/><path d="M616.74,419.3 V420.6" stroke="#333" stroke-width="0.55"/><path d="M626.96,419.3 V420.6" stroke="#333" stroke-width="0.55"/><path d="M637.18,419.3 V420.6" stroke="#333" stroke-width="0.55"/><path d="M647.4,419.3 V420.6" stroke="#333" stroke-width="0.55"/><path d="M657.62,419.3 V420.6" stroke="#333" stroke-width="0.55"/><path d="M667.84,419.3 V420.6" stroke="#333" stroke-width="0.55"/><path d="M678.06,419.3 V420.6" stroke="#333" stroke-width="0.55"/><path d="M688.28,419.3 V420.6" stroke="#333" stroke-width="0.55"/><path d="M698.5,419.3 V420.6" stroke="#333" stroke-width="0.55"/><path d="M708.72,419.3 V420.6" stroke="#333" stroke-width="0.55"/><path d="M718.94,419.3 V420.6" stroke="#333" stroke-width="0.55"/><path d="M729.16,419.3 V420.6" stroke="#333" stroke-width="0.55"/><path d="M739.38,419.3 V420.6" stroke="#333" stroke-width="0.55"/></svg>
</div>
<div class="t" id="labels"><div><span style="top:27.2px;line-height:31.2px;font-size:26px;color:#666;left:324.4px;transform:scaleX(0.856);transform-origin:0 50%;">STRATEGIC PORTFOLIOS</span><span style="top:26.16px;line-height:31.68px;font-size:26.4px;color:#555;left:676px;transform:scaleX(0.923);transform-origin:0 50%;">Product Innovation</span><span style="top:29.56px;line-height:31.68px;font-size:26.4px;color:#4c4c4c;left:963.6px;transform:scaleX(0.920);transform-origin:0 50%;">Dashboard</span><span style="top:29.56px;line-height:31.68px;font-size:26.4px;color:#4c4c4c;left:1140px;transform:scaleX(0.797);transform-origin:0 50%;">OKR</span><span style="top:29.56px;line-height:31.68px;font-size:26.4px;color:#4c4c4c;left:1241.6px;transform:scaleX(0.935);transform-origin:0 50%;">Financial targets</span><span style="top:29.56px;line-height:31.68px;font-size:26.4px;color:#4c4c4c;left:1478.8px;transform:scaleX(0.916);transform-origin:0 50%;">Waterline</span><span style="top:29.56px;line-height:31.68px;font-size:26.4px;color:#d2338f;left:1635.6px;transform:scaleX(0.919);transform-origin:0 50%;">Scenario creation</span><span style="top:31.84px;line-height:25.92px;font-size:21.6px;color:#555;left:2704.8px;">Filter...</span></div>
<div><span style="top:484.08px;line-height:15.84px;font-size:13.2px;color:#7c7c9f;font-weight:bold;letter-spacing:-0.4px;left:2514.8px;width:1200px;text-align:center;">PDF</span><span style="top:549.92px;line-height:20.16px;font-size:16.8px;color:#7c7c9f;font-weight:bold;left:2504.4px;width:1200px;text-align:center;">X</span><span style="top:608.72px;line-height:20.16px;font-size:16.8px;color:#7c7c9f;font-weight:bold;left:2504.8px;width:1200px;text-align:center;">P</span></div>
<div><span style="top:123.2px;line-height:26.4px;font-size:22px;color:#555;letter-spacing:0.08px;left:95.2px;">New optimization</span></div>
<div><span style="top:187.6px;line-height:26.4px;font-size:22px;color:#4a4d73;-webkit-text-stroke:0.32px #4a4d73;letter-spacing:0.03px;left:-347.99px;width:1200px;text-align:center;">Strategic buckets</span><span style="top:187.6px;line-height:26.4px;font-size:22px;color:#4a4d73;-webkit-text-stroke:0.32px #4a4d73;letter-spacing:0.19px;left:-40.3px;width:1200px;text-align:center;">Strategic alignment</span><span style="top:187.6px;line-height:26.4px;font-size:22px;color:#4a4d73;-webkit-text-stroke:0.32px #4a4d73;letter-spacing:0.39px;left:291.39px;width:1200px;text-align:center;">Time shift</span><span style="top:187.84px;line-height:25.92px;font-size:21.6px;color:#fff;font-weight:bold;letter-spacing:-0.92px;left:1073.6px;">Summary</span></div>
<div><span style="top:249.2px;line-height:24px;font-size:20px;color:#666;left:140px;">*</span><span style="top:240px;line-height:26.4px;font-size:22px;color:#62657a;left:190.4px;">In</span><span style="top:260.8px;line-height:26.4px;font-size:22px;color:#62657a;letter-spacing:-0.33px;left:190.4px;">scenario?</span><span style="top:250px;line-height:26.4px;font-size:22px;color:#62657a;letter-spacing:-0.67px;left:332.8px;">Name</span><span style="top:250px;line-height:26.4px;font-size:22px;color:#62657a;left:488px;">Description</span><span style="top:250px;line-height:26.4px;font-size:22px;color:#62657a;left:761.2px;transform:scaleX(0.902);transform-origin:0 50%;">NPV</span><span style="top:240px;line-height:26.4px;font-size:22px;color:#62657a;left:913.2px;">Revenues /</span><span style="top:260.8px;line-height:26.4px;font-size:22px;color:#62657a;left:913.2px;">Sales</span><span style="top:320.72px;line-height:26.4px;font-size:22px;color:#333;-webkit-text-stroke:0.68px #333;letter-spacing:-0.25px;left:147.2px;">Cross Value Stream</span><span style="top:376.56px;line-height:26.4px;font-size:22px;color:#222;-webkit-text-stroke:0.68px #222;left:316px;transform:scaleX(0.897);transform-origin:0 50%;">EPIC-001</span><span style="top:376.56px;line-height:26.4px;font-size:22px;color:#222;-webkit-text-stroke:0.68px #222;left:488px;">Customer portal redesign</span><span style="top:376.56px;line-height:26.4px;font-size:22px;color:#222;-webkit-text-stroke:0.68px #222;letter-spacing:-0.4px;left:-310px;width:1200px;text-align:right;">13,170</span><span style="top:376.56px;line-height:26.4px;font-size:22px;color:#222;-webkit-text-stroke:0.68px #222;letter-spacing:-0.4px;left:-125.6px;width:1200px;text-align:right;">628</span><span style="top:430.8px;line-height:26.4px;font-size:22px;color:#222;-webkit-text-stroke:0.68px #222;left:316px;transform:scaleX(0.897);transform-origin:0 50%;">EPIC-002</span><span style="top:430.8px;line-height:26.4px;font-size:22px;color:#222;-webkit-text-stroke:0.68px #222;left:488px;">Mobile app v3.0</span><span style="top:430.8px;line-height:26.4px;font-size:22px;color:#222;-webkit-text-stroke:0.68px #222;letter-spacing:-0.4px;left:-310px;width:1200px;text-align:right;">1,191</span><span style="top:430.8px;line-height:26.4px;font-size:22px;color:#222;-webkit-text-stroke:0.68px #222;letter-spacing:-0.4px;left:-125.6px;width:1200px;text-align:right;">6,516</span><span style="top:485.04px;line-height:26.4px;font-size:22px;color:#222;-webkit-text-stroke:0.68px #222;left:316px;transform:scaleX(0.897);transform-origin:0 50%;">EPIC-004</span><span style="top:485.04px;line-height:26.4px;font-size:22px;color:#222;-webkit-text-stroke:0.68px #222;left:488px;">Website Re-design</span><span style="top:485.04px;line-height:26.4px;font-size:22px;color:#222;-webkit-text-stroke:0.68px #222;letter-spacing:-0.4px;left:-310px;width:1200px;text-align:right;">1,824</span><span style="top:485.04px;line-height:26.4px;font-size:22px;color:#222;-webkit-text-stroke:0.68px #222;letter-spacing:-0.4px;left:-125.6px;width:1200px;text-align:right;">7,500</span><span style="top:539.28px;line-height:26.4px;font-size:22px;color:#222;-webkit-text-stroke:0.68px #222;left:316px;transform:scaleX(0.911);transform-origin:0 50%;">IT-004</span><span style="top:539.28px;line-height:26.4px;font-size:22px;color:#222;-webkit-text-stroke:0.68px #222;left:488px;">Secure Cloud Migration</span><span style="top:539.28px;line-height:26.4px;font-size:22px;color:#222;-webkit-text-stroke:0.68px #222;letter-spacing:-0.4px;left:-310px;width:1200px;text-align:right;">1,111</span><span style="top:539.28px;line-height:26.4px;font-size:22px;color:#222;-webkit-text-stroke:0.68px #222;letter-spacing:-0.4px;left:-125.6px;width:1200px;text-align:right;">4,645</span><span style="top:593.52px;line-height:26.4px;font-size:22px;color:#777;left:316px;transform:scaleX(0.911);transform-origin:0 50%;">IT-005</span><span style="top:593.52px;line-height:26.4px;font-size:22px;color:#777;left:488px;">People system</span><span style="top:593.52px;line-height:26.4px;font-size:22px;color:#777;letter-spacing:-0.4px;left:-310px;width:1200px;text-align:right;">-4,394</span><span style="top:593.52px;line-height:26.4px;font-size:22px;color:#777;letter-spacing:-0.4px;left:-125.6px;width:1200px;text-align:right;">3,755</span><span style="top:647.76px;line-height:26.4px;font-size:22px;color:#222;-webkit-text-stroke:0.68px #222;left:316px;transform:scaleX(0.911);transform-origin:0 50%;">IT-008</span><span style="top:647.76px;line-height:26.4px;font-size:22px;color:#222;-webkit-text-stroke:0.68px #222;left:488px;">IoT Security Framework</span><span style="top:647.76px;line-height:26.4px;font-size:22px;color:#222;-webkit-text-stroke:0.68px #222;letter-spacing:-0.4px;left:-310px;width:1200px;text-align:right;">1,857</span><span style="top:647.76px;line-height:26.4px;font-size:22px;color:#222;-webkit-text-stroke:0.68px #222;letter-spacing:-0.4px;left:-125.6px;width:1200px;text-align:right;">5,463</span><span style="top:702px;line-height:26.4px;font-size:22px;color:#222;-webkit-text-stroke:0.68px #222;left:316px;transform:scaleX(0.911);transform-origin:0 50%;">IT-009</span><span style="top:702px;line-height:26.4px;font-size:22px;color:#222;-webkit-text-stroke:0.68px #222;left:488px;">Smart Retail Insights</span><span style="top:702px;line-height:26.4px;font-size:22px;color:#222;-webkit-text-stroke:0.68px #222;letter-spacing:-0.4px;left:-310px;width:1200px;text-align:right;">1,908</span><span style="top:702px;line-height:26.4px;font-size:22px;color:#222;-webkit-text-stroke:0.68px #222;letter-spacing:-0.4px;left:-125.6px;width:1200px;text-align:right;">5,182</span><span style="top:756.24px;line-height:26.4px;font-size:22px;color:#222;-webkit-text-stroke:0.68px #222;left:316px;transform:scaleX(0.911);transform-origin:0 50%;">IT-012</span><span style="top:756.24px;line-height:26.4px;font-size:22px;color:#222;-webkit-text-stroke:0.68px #222;left:488px;">Sentiment Analysis</span><span style="top:756.24px;line-height:26.4px;font-size:22px;color:#222;-webkit-text-stroke:0.68px #222;letter-spacing:-0.4px;left:-310px;width:1200px;text-align:right;">1,482</span><span style="top:756.24px;line-height:26.4px;font-size:22px;color:#222;-webkit-text-stroke:0.68px #222;letter-spacing:-0.4px;left:-125.6px;width:1200px;text-align:right;">4,328</span><span style="top:810.48px;line-height:26.4px;font-size:22px;color:#222;-webkit-text-stroke:0.68px #222;left:316px;transform:scaleX(0.911);transform-origin:0 50%;">IT-013</span><span style="top:810.48px;line-height:26.4px;font-size:22px;color:#222;-webkit-text-stroke:0.68px #222;left:488px;">Fraud Detection</span><span style="top:810.48px;line-height:26.4px;font-size:22px;color:#222;-webkit-text-stroke:0.68px #222;letter-spacing:-0.4px;left:-310px;width:1200px;text-align:right;">1,628</span><span style="top:810.48px;line-height:26.4px;font-size:22px;color:#222;-webkit-text-stroke:0.68px #222;letter-spacing:-0.4px;left:-125.6px;width:1200px;text-align:right;">4,507</span><span style="top:863.12px;line-height:26.4px;font-size:22px;color:#333;-webkit-text-stroke:0.68px #333;left:147.2px;">FinTech</span><span style="top:918.96px;line-height:26.4px;font-size:22px;color:#222;-webkit-text-stroke:0.68px #222;left:316px;">FinTech</span><span style="top:918.96px;line-height:26.4px;font-size:22px;color:#222;-webkit-text-stroke:0.68px #222;left:488px;">FinTech</span><span style="top:918.96px;line-height:26.4px;font-size:22px;color:#222;-webkit-text-stroke:0.68px #222;letter-spacing:-0.4px;left:-310px;width:1200px;text-align:right;">1,075</span><span style="top:918.96px;line-height:26.4px;font-size:22px;color:#222;-webkit-text-stroke:0.68px #222;letter-spacing:-0.4px;left:-125.6px;width:1200px;text-align:right;">0</span><span style="top:971.6px;line-height:26.4px;font-size:22px;color:#333;-webkit-text-stroke:0.68px #333;left:147.2px;">Mobile</span><span style="top:1027.44px;line-height:26.4px;font-size:22px;color:#222;-webkit-text-stroke:0.68px #222;left:316px;">Mobile</span><span style="top:1027.44px;line-height:26.4px;font-size:22px;color:#222;-webkit-text-stroke:0.68px #222;left:488px;">Mobile</span><span style="top:1027.44px;line-height:26.4px;font-size:22px;color:#222;-webkit-text-stroke:0.68px #222;letter-spacing:-0.4px;left:-310px;width:1200px;text-align:right;">656</span><span style="top:1027.44px;line-height:26.4px;font-size:22px;color:#222;-webkit-text-stroke:0.68px #222;letter-spacing:-0.4px;left:-125.6px;width:1200px;text-align:right;">0</span><span style="top:1080.08px;line-height:26.4px;font-size:22px;color:#333;-webkit-text-stroke:0.68px #333;left:147.2px;">Risk Mgmt</span><span style="top:1135.92px;line-height:26.4px;font-size:22px;color:#222;-webkit-text-stroke:0.68px #222;left:316px;">Risk Mgmt</span><span style="top:1135.92px;line-height:26.4px;font-size:22px;color:#222;-webkit-text-stroke:0.68px #222;left:488px;">Risk Mgmt</span><span style="top:1135.92px;line-height:26.4px;font-size:22px;color:#222;-webkit-text-stroke:0.68px #222;letter-spacing:-0.4px;left:-310px;width:1200px;text-align:right;">6,766</span><span style="top:1135.92px;line-height:26.4px;font-size:22px;color:#222;-webkit-text-stroke:0.68px #222;letter-spacing:-0.4px;left:-125.6px;width:1200px;text-align:right;">0</span></div>
<div></div>
<div><span style="top:239.2px;line-height:36px;font-size:30px;color:#333;letter-spacing:-0.44px;left:1113.2px;">KPIs</span><span style="top:327.6px;line-height:26.4px;font-size:22px;color:#222;letter-spacing:0.01px;left:634.2px;width:1200px;text-align:center;">Number of Projects</span><span style="top:424.88px;line-height:35.04px;font-size:29.2px;color:#9a3d79;letter-spacing:2.16px;left:635.28px;width:1200px;text-align:center;">15</span><span style="top:327.6px;line-height:26.4px;font-size:22px;color:#222;letter-spacing:0.2px;left:864.3px;width:1200px;text-align:center;">Investment</span><span style="top:424.88px;line-height:35.04px;font-size:29.2px;color:#9a3d79;letter-spacing:0.11px;left:864.26px;width:1200px;text-align:center;">36,511 K$</span><span style="top:327.6px;line-height:26.4px;font-size:22px;color:#222;letter-spacing:0.18px;left:1096.29px;width:1200px;text-align:center;">Budget Utilization</span><span style="top:424.88px;line-height:35.04px;font-size:29.2px;color:#9a3d79;letter-spacing:-1.34px;left:1095.53px;width:1200px;text-align:center;">91 %</span><span style="top:327.6px;line-height:26.4px;font-size:22px;color:#222;letter-spacing:-1.48px;left:1326.06px;width:1200px;text-align:center;">NPV</span><span style="top:424.88px;line-height:35.04px;font-size:29.2px;color:#9a3d79;letter-spacing:0.04px;left:1326.82px;width:1200px;text-align:center;">33,749 $</span></div>
<div><span style="top:647.6px;line-height:36px;font-size:30px;color:#333;letter-spacing:-0.18px;left:1113.2px;">Capacity Analysis</span><span style="top:766.8px;line-height:26.4px;font-size:22px;color:#222;-webkit-text-stroke:0.68px #222;left:698px;width:1200px;text-align:center;">Resource</span><span style="top:716px;line-height:26.4px;font-size:22px;color:#222;-webkit-text-stroke:0.68px #222;left:1122.2px;width:1200px;text-align:center;">All</span><span style="top:747.6px;line-height:26.4px;font-size:22px;color:#222;-webkit-text-stroke:0.68px #222;letter-spacing:0.2px;left:1122.3px;width:1200px;text-align:center;">Ratio Load / Availability</span><span style="top:779.2px;line-height:26.4px;font-size:22px;color:#222;-webkit-text-stroke:0.68px #222;letter-spacing:-0.4px;left:1122px;width:1200px;text-align:center;">2025</span><span style="top:813.2px;line-height:26.4px;font-size:22px;color:#222;-webkit-text-stroke:0.68px #222;left:891.8px;width:1200px;text-align:center;transform:scaleX(0.900);transform-origin:50% 50%;">Q1</span><span style="top:813.2px;line-height:26.4px;font-size:22px;color:#222;-webkit-text-stroke:0.68px #222;left:1047.6px;width:1200px;text-align:center;transform:scaleX(0.900);transform-origin:50% 50%;">Q2</span><span style="top:813.2px;line-height:26.4px;font-size:22px;color:#222;-webkit-text-stroke:0.68px #222;left:1203.4px;width:1200px;text-align:center;transform:scaleX(0.900);transform-origin:50% 50%;">Q3</span><span style="top:813.2px;line-height:26.4px;font-size:22px;color:#222;-webkit-text-stroke:0.68px #222;left:1355.8px;width:1200px;text-align:center;transform:scaleX(0.900);transform-origin:50% 50%;">Q4</span><span style="top:855.8px;line-height:26.4px;font-size:22px;color:#2e2a5c;-webkit-text-stroke:0.68px #2e2a5c;letter-spacing:0.19px;left:1199.2px;">Digital Transformation Office</span><span style="top:903.5px;line-height:26.4px;font-size:22px;color:#222;-webkit-text-stroke:0.68px #222;left:1192.8px;">Business Analysts</span><span style="top:903.5px;line-height:26.4px;font-size:22px;color:#2a2a2a;-webkit-text-stroke:0.68px #2a2a2a;left:361.2px;width:1200px;text-align:right;transform:scaleX(0.893);transform-origin:100% 50%;">89 %</span><span style="top:903.5px;line-height:26.4px;font-size:22px;color:#fff;-webkit-text-stroke:0.68px #fff;left:517.2px;width:1200px;text-align:right;transform:scaleX(0.891);transform-origin:100% 50%;">105 %</span><span style="top:903.5px;line-height:26.4px;font-size:22px;color:#2a2a2a;-webkit-text-stroke:0.68px #2a2a2a;left:672.8px;width:1200px;text-align:right;transform:scaleX(0.893);transform-origin:100% 50%;">91 %</span><span style="top:903.5px;line-height:26.4px;font-size:22px;color:#2a2a2a;-webkit-text-stroke:0.68px #2a2a2a;left:822px;width:1200px;text-align:right;transform:scaleX(0.893);transform-origin:100% 50%;">46 %</span><span style="top:950.9px;line-height:26.4px;font-size:22px;color:#222;-webkit-text-stroke:0.68px #222;left:1192.8px;">Product Managers</span><span style="top:950.9px;line-height:26.4px;font-size:22px;color:#2a2a2a;-webkit-text-stroke:0.68px #2a2a2a;left:672.8px;width:1200px;text-align:right;transform:scaleX(0.893);transform-origin:100% 50%;">33 %</span><span style="top:950.9px;line-height:26.4px;font-size:22px;color:#2a2a2a;-webkit-text-stroke:0.68px #2a2a2a;left:822px;width:1200px;text-align:right;transform:scaleX(0.893);transform-origin:100% 50%;">27 %</span><span style="top:998.3px;line-height:26.4px;font-size:22px;color:#222;-webkit-text-stroke:0.68px #222;left:1192.8px;">Solution Engineers</span><span style="top:998.3px;line-height:26.4px;font-size:22px;color:#2a2a2a;-webkit-text-stroke:0.68px #2a2a2a;left:361.2px;width:1200px;text-align:right;transform:scaleX(0.893);transform-origin:100% 50%;">33 %</span><span style="top:998.3px;line-height:26.4px;font-size:22px;color:#2a2a2a;-webkit-text-stroke:0.68px #2a2a2a;left:517.2px;width:1200px;text-align:right;transform:scaleX(0.893);transform-origin:100% 50%;">34 %</span><span style="top:998.3px;line-height:26.4px;font-size:22px;color:#2a2a2a;-webkit-text-stroke:0.68px #2a2a2a;left:672.8px;width:1200px;text-align:right;transform:scaleX(0.855);transform-origin:100% 50%;">2 %</span><span style="top:1044px;line-height:26.4px;font-size:22px;color:#2e2a5c;-webkit-text-stroke:0.68px #2e2a5c;left:1199.2px;">Information &amp; Solutions</span><span style="top:1091.7px;line-height:26.4px;font-size:22px;color:#222;-webkit-text-stroke:0.68px #222;left:1192.8px;">Software Developm...</span><span style="top:1091.7px;line-height:26.4px;font-size:22px;color:#fff;-webkit-text-stroke:0.68px #fff;left:361.2px;width:1200px;text-align:right;transform:scaleX(0.891);transform-origin:100% 50%;">108 %</span><span style="top:1091.7px;line-height:26.4px;font-size:22px;color:#fff;-webkit-text-stroke:0.68px #fff;left:517.2px;width:1200px;text-align:right;transform:scaleX(0.891);transform-origin:100% 50%;">124 %</span><span style="top:1091.7px;line-height:26.4px;font-size:22px;color:#fff;-webkit-text-stroke:0.68px #fff;left:672.8px;width:1200px;text-align:right;transform:scaleX(0.891);transform-origin:100% 50%;">108 %</span><span style="top:1091.7px;line-height:26.4px;font-size:22px;color:#2a2a2a;-webkit-text-stroke:0.68px #2a2a2a;left:822px;width:1200px;text-align:right;transform:scaleX(0.893);transform-origin:100% 50%;">41 %</span><span style="top:1139.1px;line-height:26.4px;font-size:22px;color:#222;-webkit-text-stroke:0.68px #222;left:1192.8px;">Enterprise System a...</span><span style="top:1139.1px;line-height:26.4px;font-size:22px;color:#2a2a2a;-webkit-text-stroke:0.68px #2a2a2a;left:361.2px;width:1200px;text-align:right;transform:scaleX(0.893);transform-origin:100% 50%;">52 %</span><span style="top:1139.1px;line-height:26.4px;font-size:22px;color:#2a2a2a;-webkit-text-stroke:0.68px #2a2a2a;left:517.2px;width:1200px;text-align:right;transform:scaleX(0.893);transform-origin:100% 50%;">44 %</span><span style="top:1139.1px;line-height:26.4px;font-size:22px;color:#2a2a2a;-webkit-text-stroke:0.68px #2a2a2a;left:672.8px;width:1200px;text-align:right;transform:scaleX(0.893);transform-origin:100% 50%;">15 %</span><span style="top:1186.5px;line-height:26.4px;font-size:22px;color:#222;-webkit-text-stroke:0.68px #222;left:1192.8px;">Enterprise Architect...</span><span style="top:1186.5px;line-height:26.4px;font-size:22px;color:#2a2a2a;-webkit-text-stroke:0.68px #2a2a2a;left:361.2px;width:1200px;text-align:right;transform:scaleX(0.893);transform-origin:100% 50%;">40 %</span><span style="top:1186.5px;line-height:26.4px;font-size:22px;color:#2a2a2a;-webkit-text-stroke:0.68px #2a2a2a;left:517.2px;width:1200px;text-align:right;transform:scaleX(0.893);transform-origin:100% 50%;">87 %</span><span style="top:1186.5px;line-height:26.4px;font-size:22px;color:#2a2a2a;-webkit-text-stroke:0.68px #2a2a2a;left:672.8px;width:1200px;text-align:right;transform:scaleX(0.893);transform-origin:100% 50%;">94 %</span><span style="top:1186.5px;line-height:26.4px;font-size:22px;color:#2a2a2a;-webkit-text-stroke:0.68px #2a2a2a;left:822px;width:1200px;text-align:right;transform:scaleX(0.893);transform-origin:100% 50%;">21 %</span><span style="top:1233.9px;line-height:26.4px;font-size:22px;color:#222;-webkit-text-stroke:0.68px #222;left:1192.8px;">Cybersecurity and C...</span><span style="top:1233.9px;line-height:26.4px;font-size:22px;color:#2a2a2a;-webkit-text-stroke:0.68px #2a2a2a;left:361.2px;width:1200px;text-align:right;transform:scaleX(0.893);transform-origin:100% 50%;">83 %</span><span style="top:1233.9px;line-height:26.4px;font-size:22px;color:#2a2a2a;-webkit-text-stroke:0.68px #2a2a2a;left:517.2px;width:1200px;text-align:right;transform:scaleX(0.893);transform-origin:100% 50%;">75 %</span><span style="top:1233.9px;line-height:26.4px;font-size:22px;color:#2a2a2a;-webkit-text-stroke:0.68px #2a2a2a;left:672.8px;width:1200px;text-align:right;transform:scaleX(0.893);transform-origin:100% 50%;">52 %</span><span style="top:1233.9px;line-height:26.4px;font-size:22px;color:#2a2a2a;-webkit-text-stroke:0.68px #2a2a2a;left:822px;width:1200px;text-align:right;transform:scaleX(0.893);transform-origin:100% 50%;">21 %</span><span style="top:1279.6px;line-height:26.4px;font-size:22px;color:#2e2a5c;-webkit-text-stroke:0.68px #2e2a5c;letter-spacing:-0.44px;left:1199.2px;">Shared Resources</span><span style="top:1327.3px;line-height:26.4px;font-size:22px;color:#222;-webkit-text-stroke:0.68px #222;left:1192.8px;">Business consultants</span><span style="top:1327.3px;line-height:26.4px;font-size:22px;color:#2a2a2a;-webkit-text-stroke:0.68px #2a2a2a;left:361.2px;width:1200px;text-align:right;transform:scaleX(0.893);transform-origin:100% 50%;">68 %</span><span style="top:1327.3px;line-height:26.4px;font-size:22px;color:#2a2a2a;-webkit-text-stroke:0.68px #2a2a2a;left:517.2px;width:1200px;text-align:right;transform:scaleX(0.893);transform-origin:100% 50%;">55 %</span><span style="top:1327.3px;line-height:26.4px;font-size:22px;color:#2a2a2a;-webkit-text-stroke:0.68px #2a2a2a;left:672.8px;width:1200px;text-align:right;transform:scaleX(0.893);transform-origin:100% 50%;">26 %</span><span style="top:1327.3px;line-height:26.4px;font-size:22px;color:#2a2a2a;-webkit-text-stroke:0.68px #2a2a2a;left:822px;width:1200px;text-align:right;transform:scaleX(0.855);transform-origin:100% 50%;">9 %</span><span style="top:1374.7px;line-height:26.4px;font-size:22px;color:#222;-webkit-text-stroke:0.68px #222;left:1192.8px;">Implementation con...</span><span style="top:1374.7px;line-height:26.4px;font-size:22px;color:#2a2a2a;-webkit-text-stroke:0.68px #2a2a2a;left:361.2px;width:1200px;text-align:right;transform:scaleX(0.893);transform-origin:100% 50%;">31 %</span><span style="top:1374.7px;line-height:26.4px;font-size:22px;color:#2a2a2a;-webkit-text-stroke:0.68px #2a2a2a;left:517.2px;width:1200px;text-align:right;transform:scaleX(0.893);transform-origin:100% 50%;">43 %</span><span style="top:1374.7px;line-height:26.4px;font-size:22px;color:#2a2a2a;-webkit-text-stroke:0.68px #2a2a2a;left:672.8px;width:1200px;text-align:right;transform:scaleX(0.893);transform-origin:100% 50%;">40 %</span><span style="top:1374.7px;line-height:26.4px;font-size:22px;color:#2a2a2a;-webkit-text-stroke:0.68px #2a2a2a;left:822px;width:1200px;text-align:right;transform:scaleX(0.893);transform-origin:100% 50%;">17 %</span><span style="top:1422.1px;line-height:26.4px;font-size:22px;color:#222;-webkit-text-stroke:0.68px #222;left:1192.8px;">External Partners</span><span style="top:1422.1px;line-height:26.4px;font-size:22px;color:#2a2a2a;-webkit-text-stroke:0.68px #2a2a2a;left:361.2px;width:1200px;text-align:right;transform:scaleX(0.893);transform-origin:100% 50%;">23 %</span><span style="top:1422.1px;line-height:26.4px;font-size:22px;color:#2a2a2a;-webkit-text-stroke:0.68px #2a2a2a;left:517.2px;width:1200px;text-align:right;transform:scaleX(0.893);transform-origin:100% 50%;">32 %</span><span style="top:1422.1px;line-height:26.4px;font-size:22px;color:#2a2a2a;-webkit-text-stroke:0.68px #2a2a2a;left:672.8px;width:1200px;text-align:right;transform:scaleX(0.893);transform-origin:100% 50%;">36 %</span><span style="top:1422.1px;line-height:26.4px;font-size:22px;color:#2a2a2a;-webkit-text-stroke:0.68px #2a2a2a;left:822px;width:1200px;text-align:right;transform:scaleX(0.855);transform-origin:100% 50%;">6 %</span></div>
<div><span style="top:239.2px;line-height:36px;font-size:30px;color:#333;letter-spacing:-0.48px;left:2076.8px;">OKR Attainment</span><span style="top:313.84px;line-height:23.52px;font-size:19.6px;color:#333;left:1854.8px;width:1200px;text-align:center;">0.0</span><span style="top:313.84px;line-height:23.52px;font-size:19.6px;color:#333;left:1931px;width:1200px;text-align:center;">0.2</span><span style="top:313.84px;line-height:23.52px;font-size:19.6px;color:#333;left:2007.2px;width:1200px;text-align:center;">0.4</span><span style="top:313.84px;line-height:23.52px;font-size:19.6px;color:#333;left:2083.4px;width:1200px;text-align:center;">0.6</span><span style="top:313.84px;line-height:23.52px;font-size:19.6px;color:#333;left:2159.6px;width:1200px;text-align:center;">0.8</span><span style="top:313.84px;line-height:23.52px;font-size:19.6px;color:#333;left:2235.8px;width:1200px;text-align:center;">1.0</span><span style="top:313.84px;line-height:23.52px;font-size:19.6px;color:#333;left:2312px;width:1200px;text-align:center;">1.2</span><span style="top:313.84px;line-height:23.52px;font-size:19.6px;color:#333;left:2388.2px;width:1200px;text-align:center;">1.4</span><span style="top:363.2px;line-height:26.4px;font-size:22px;color:#222;-webkit-text-stroke:0.68px #222;letter-spacing:-0.53px;left:1247.87px;width:1200px;text-align:right;">Add 10 CX KPIs</span><span style="top:426.92px;line-height:26.4px;font-size:22px;color:#222;-webkit-text-stroke:0.68px #222;letter-spacing:-0.27px;left:1248.13px;width:1200px;text-align:right;">Bug-related Tickets Under 10%</span><span style="top:490.64px;line-height:26.4px;font-size:22px;color:#222;-webkit-text-stroke:0.68px #222;letter-spacing:-0.07px;left:1248.33px;width:1200px;text-align:right;">Connect 6 Apps to DevOps Toolchain</span><span style="top:554.36px;line-height:26.4px;font-size:22px;color:#222;-webkit-text-stroke:0.68px #222;letter-spacing:-0.06px;left:1248.34px;width:1200px;text-align:right;">Create 15 Automated QA Tests</span><span style="top:618.08px;line-height:26.4px;font-size:22px;color:#222;-webkit-text-stroke:0.68px #222;letter-spacing:-0.3px;left:1248.1px;width:1200px;text-align:right;">Double On-Time Delivery</span><span style="top:681.8px;line-height:26.4px;font-size:22px;color:#222;-webkit-text-stroke:0.68px #222;letter-spacing:0.08px;left:1248.48px;width:1200px;text-align:right;">Flow Metrics Across 200 Apps</span><span style="top:745.52px;line-height:26.4px;font-size:22px;color:#222;-webkit-text-stroke:0.68px #222;letter-spacing:-0.03px;left:1248.37px;width:1200px;text-align:right;">Proactive Monitoring On 55 Apps</span></div>
<div><span style="top:868px;line-height:36px;font-size:30px;color:#333;letter-spacing:-0.37px;left:2076.8px;">Cost/Revenue Analysis</span><span style="top:940.88px;line-height:24.96px;font-size:20.8px;color:#444;letter-spacing:0.15px;left:968.55px;width:1200px;text-align:right;">6 000</span><span style="top:1009.76px;line-height:24.96px;font-size:20.8px;color:#444;letter-spacing:0.15px;left:968.55px;width:1200px;text-align:right;">4 000</span><span style="top:1078.64px;line-height:24.96px;font-size:20.8px;color:#444;letter-spacing:0.15px;left:968.55px;width:1200px;text-align:right;">2 000</span><span style="top:1147.52px;line-height:24.96px;font-size:20.8px;color:#444;left:968.4px;width:1200px;text-align:right;">0</span><span style="top:1216.4px;line-height:24.96px;font-size:20.8px;color:#444;letter-spacing:0.24px;left:968.64px;width:1200px;text-align:right;">-2 000</span><span style="top:1285.28px;line-height:24.96px;font-size:20.8px;color:#444;letter-spacing:0.24px;left:968.64px;width:1200px;text-align:right;">-4 000</span><span style="top:1354.16px;line-height:24.96px;font-size:20.8px;color:#444;letter-spacing:0.24px;left:968.64px;width:1200px;text-align:right;">-6 000</span><span style="top:1423.04px;line-height:24.96px;font-size:20.8px;color:#444;letter-spacing:0.24px;left:968.64px;width:1200px;text-align:right;">-8 000</span><span style="top:1491.92px;line-height:24.96px;font-size:20.8px;color:#444;letter-spacing:0.09px;left:968.49px;width:1200px;text-align:right;">-10 000</span><span style="top:1560.8px;line-height:24.96px;font-size:20.8px;color:#444;letter-spacing:0.09px;left:968.49px;width:1200px;text-align:right;">-12 000</span><span style="top:1629.68px;line-height:24.96px;font-size:20.8px;color:#444;letter-spacing:0.09px;left:968.49px;width:1200px;text-align:right;">-14 000</span><span style="top:1649.6px;line-height:24px;font-size:20px;color:#444;left:1600.44px;width:1200px;text-align:center;transform:scaleX(0.930);transform-origin:50% 50%;">Q1</span><span style="top:1649.6px;line-height:24px;font-size:20px;color:#444;left:1641.32px;width:1200px;text-align:center;transform:scaleX(0.930);transform-origin:50% 50%;">Q2</span><span style="top:1649.6px;line-height:24px;font-size:20px;color:#444;left:1682.2px;width:1200px;text-align:center;transform:scaleX(0.930);transform-origin:50% 50%;">Q3</span><span style="top:1649.6px;line-height:24px;font-size:20px;color:#444;left:1723.08px;width:1200px;text-align:center;transform:scaleX(0.930);transform-origin:50% 50%;">Q4</span><span style="top:1649.6px;line-height:24px;font-size:20px;color:#444;left:1763.96px;width:1200px;text-align:center;transform:scaleX(0.930);transform-origin:50% 50%;">Q1</span><span style="top:1649.6px;line-height:24px;font-size:20px;color:#444;left:1804.84px;width:1200px;text-align:center;transform:scaleX(0.930);transform-origin:50% 50%;">Q2</span><span style="top:1649.6px;line-height:24px;font-size:20px;color:#444;left:1845.72px;width:1200px;text-align:center;transform:scaleX(0.930);transform-origin:50% 50%;">Q3</span><span style="top:1649.6px;line-height:24px;font-size:20px;color:#444;left:1886.6px;width:1200px;text-align:center;transform:scaleX(0.930);transform-origin:50% 50%;">Q4</span><span style="top:1649.6px;line-height:24px;font-size:20px;color:#444;left:1927.48px;width:1200px;text-align:center;transform:scaleX(0.930);transform-origin:50% 50%;">Q1</span><span style="top:1649.6px;line-height:24px;font-size:20px;color:#444;left:1968.36px;width:1200px;text-align:center;transform:scaleX(0.930);transform-origin:50% 50%;">Q2</span><span style="top:1649.6px;line-height:24px;font-size:20px;color:#444;left:2009.24px;width:1200px;text-align:center;transform:scaleX(0.930);transform-origin:50% 50%;">Q3</span><span style="top:1649.6px;line-height:24px;font-size:20px;color:#444;left:2050.12px;width:1200px;text-align:center;transform:scaleX(0.930);transform-origin:50% 50%;">Q4</span><span style="top:1649.6px;line-height:24px;font-size:20px;color:#444;left:2091px;width:1200px;text-align:center;transform:scaleX(0.930);transform-origin:50% 50%;">Q1</span><span style="top:1649.6px;line-height:24px;font-size:20px;color:#444;left:2131.88px;width:1200px;text-align:center;transform:scaleX(0.930);transform-origin:50% 50%;">Q2</span><span style="top:1649.6px;line-height:24px;font-size:20px;color:#444;left:2172.76px;width:1200px;text-align:center;transform:scaleX(0.930);transform-origin:50% 50%;">Q3</span><span style="top:1649.6px;line-height:24px;font-size:20px;color:#444;left:2213.64px;width:1200px;text-align:center;transform:scaleX(0.930);transform-origin:50% 50%;">Q4</span><span style="top:1649.6px;line-height:24px;font-size:20px;color:#444;left:2254.52px;width:1200px;text-align:center;transform:scaleX(0.930);transform-origin:50% 50%;">Q1</span><span style="top:1649.6px;line-height:24px;font-size:20px;color:#444;left:2295.4px;width:1200px;text-align:center;transform:scaleX(0.930);transform-origin:50% 50%;">Q2</span><span style="top:1649.6px;line-height:24px;font-size:20px;color:#444;left:2336.28px;width:1200px;text-align:center;transform:scaleX(0.930);transform-origin:50% 50%;">Q3</span><span style="top:1649.6px;line-height:24px;font-size:20px;color:#444;left:2377.16px;width:1200px;text-align:center;transform:scaleX(0.930);transform-origin:50% 50%;">Q4</span><span style="top:1679.92px;line-height:24.96px;font-size:20.8px;color:#444;letter-spacing:0.13px;left:1662.47px;width:1200px;text-align:center;">2025</span><span style="top:1679.92px;line-height:24.96px;font-size:20.8px;color:#444;letter-spacing:0.13px;left:1826.07px;width:1200px;text-align:center;">2026</span><span style="top:1679.92px;line-height:24.96px;font-size:20.8px;color:#444;letter-spacing:0.13px;left:1989.67px;width:1200px;text-align:center;">2027</span><span style="top:1679.92px;line-height:24.96px;font-size:20.8px;color:#444;letter-spacing:0.13px;left:2153.27px;width:1200px;text-align:center;">2028</span><span style="top:1679.92px;line-height:24.96px;font-size:20.8px;color:#444;letter-spacing:0.13px;left:2316.87px;width:1200px;text-align:center;">2029</span></div></div>
</div></body></html>
